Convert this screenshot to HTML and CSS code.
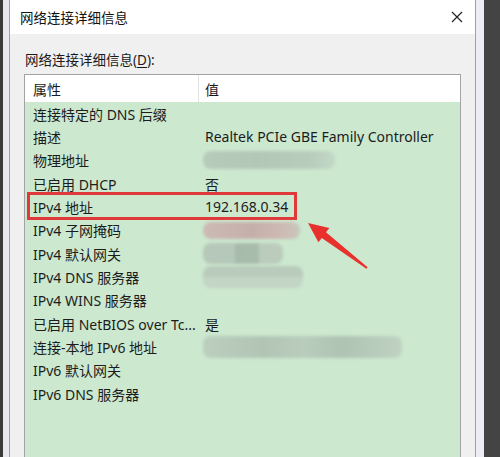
FILE: index.html
```html
<!DOCTYPE html>
<html lang="zh-CN">
<head>
<meta charset="utf-8">
<title>网络连接详细信息</title>
<link rel="stylesheet" href="styles.css">
</head>
<body>
<div class="screen">
  <div class="edge-l"></div>
  <div class="frame-l"></div>
  <div class="dialog">
    <div class="titlebar">
      <span class="title">网络连接详细信息</span>
      <svg class="close" width="12" height="12" viewBox="0 0 12 12"><path d="M1 1L11 11M11 1L1 11" stroke="#222" stroke-width="1.2" fill="none"/></svg>
    </div>
    <div class="body">
      <div class="label">网络连接详细信息(<u>D</u>):</div>
      <div class="list">
        <div class="head">
          <div class="hcell">属性</div>
          <div class="hcell hval">值</div>
        </div>
        <div class="row"><div class="k">连接特定的 DNS 后缀</div><div class="v"></div></div>
        <div class="row"><div class="k">描述</div><div class="v">Realtek PCIe GBE Family Controller</div></div>
        <div class="row"><div class="k">物理地址</div><div class="v"><span class="blob b-mac"></span></div></div>
        <div class="row"><div class="k">已启用 DHCP</div><div class="v">否</div></div>
        <div class="row hl"><div class="k">IPv4 地址</div><div class="v">192.168.0.34</div></div>
        <div class="row"><div class="k">IPv4 子网掩码</div><div class="v"><span class="blob b-mask"></span></div></div>
        <div class="row"><div class="k">IPv4 默认网关</div><div class="v"><span class="blob b-gw"></span></div></div>
        <div class="row"><div class="k">IPv4 DNS 服务器</div><div class="v"><span class="blob b-dns"></span></div></div>
        <div class="row"><div class="k">IPv4 WINS 服务器</div><div class="v"></div></div>
        <div class="row"><div class="k">已启用 NetBIOS over Tc...</div><div class="v">是</div></div>
        <div class="row"><div class="k">连接-本地 IPv6 地址</div><div class="v"><span class="blob b-v6"></span></div></div>
        <div class="row"><div class="k">IPv6 默认网关</div><div class="v"></div></div>
        <div class="row"><div class="k">IPv6 DNS 服务器</div><div class="v"></div></div>
        <div class="row"><div class="k"></div><div class="v"></div></div>
        <div class="row"><div class="k"></div><div class="v"></div></div>
      </div>
    </div>
    <svg class="arrow" width="100" height="70" viewBox="300 215 100 70">
      <polygon points="307,223 328.4,227.9 325,232.3 366.6,267.2 365.4,268.8 320.8,237.9 317.4,242.3" fill="#e8302c"/>
    </svg>
  </div>
  <div class="frame-r"></div>
  <div class="edge-r"></div>
</div>
</body>
</html>
```
FILE: styles.css
```css
html, body {
  margin: 0;
  padding: 0;
}
body {
  width: 500px;
  height: 457px;
  overflow: hidden;
  background: #3d3d3d;
  font-family: "Noto Sans", "Noto Sans CJK SC", sans-serif;
}
.screen {
  display: flex;
  height: 457px;
}
.edge-l {
  width: 3px;
  background: #3a3a3a;
}
.frame-l {
  width: 6px;
  background: #e7e8ee;
}
.frame-r {
  width: 8px;
  background: #eceef3;
}
.edge-r {
  width: 16px;
  background: #444444;
}
.dialog {
  width: 465px;
  border-left: 1px solid #7fa7d6;
  border-right: 1px solid #7fa7d6;
  background: #f0f0f0;
  display: flex;
  flex-direction: column;
  position: relative;
  overflow: hidden;
}
.titlebar {
  flex: 0 0 34px;
  height: 34px;
  background: #ffffff;
  display: flex;
  align-items: center;
  justify-content: space-between;
  padding: 0 12px 0 10px;
}
.title {
  font-size: 13.5px;
  color: #111;
}
.close {
  display: block;
}
.body {
  padding: 16px 14px 0 14px;
  flex: 1 1 auto;
  min-height: 0;
}
.label {
  font-size: 13.5px;
  line-height: 20px;
  color: #1a1a1a;
  margin-bottom: 4px;
  padding-left: 1px;
}
.label u {
  text-decoration-thickness: 1px;
  text-underline-offset: 2px;
}
.list {
  width: 435px;
  border: 1px solid #a3a3a3;
  border-bottom: none;
  background: #cce8cf;
  height: 400px;
}
.head {
  height: 27px;
  background: #ffffff;
  display: grid;
  grid-template-columns: 173px 1fr;
}
.hcell {
  font-size: 14px;
  color: #1a1a1a;
  padding-left: 8px;
  display: flex;
  align-items: center;
}
.hval {
  border-left: 1px solid #e3e3e3;
  padding-left: 6px;
}
.row {
  height: 23.33px;
  display: grid;
  grid-template-columns: 173px 1fr;
  align-items: center;
  font-size: 14px;
  color: #1c1c1c;
  position: relative;
}
.k {
  padding-left: 8px;
  white-space: nowrap;
  overflow: hidden;
}
.v {
  padding-left: 7px;
  white-space: nowrap;
  display: flex;
  align-items: center;
}
.hl::after {
  content: "";
  position: absolute;
  left: 2px;
  top: -3px;
  width: 264px;
  height: 22px;
  border: 3px solid #e0393a;
}
.blob {
  display: block;
  margin-left: -2px;
  border-radius: 8px;
  filter: blur(1.5px);
}
.b-mac {
  width: 132px;
  height: 18px;
  background: linear-gradient(90deg, #b7cbbb, #b3c7b7 40%, #b9ccbc 80%, #c3d8c6);
}
.b-mask {
  width: 97px;
  height: 17px;
  background: linear-gradient(90deg, #cbbab4, #c6afaa 50%, #cdb9b3 80%, #c8c8bd);
}
.b-gw {
  width: 80px;
  height: 21px;
  background: linear-gradient(90deg, #b6c8b9 0, #b6c8b9 40%, #a7bbab 40%, #a9bcac 70%, #bbccbd 70%);
}
.b-dns {
  width: 100px;
  height: 22px;
  background: linear-gradient(180deg, #b9cbbb 0, #b9cbbb 50%, #c3d5c5 50%);
}
.b-v6 {
  width: 199px;
  height: 22px;
  background: linear-gradient(90deg, #bccfbf 0, #b2c5b5 30%, #bacdbd 50%, #afc3b3 70%, #c0d3c3 100%);
}
.arrow {
  position: absolute;
  left: 291px;
  top: 215px;
}
```
